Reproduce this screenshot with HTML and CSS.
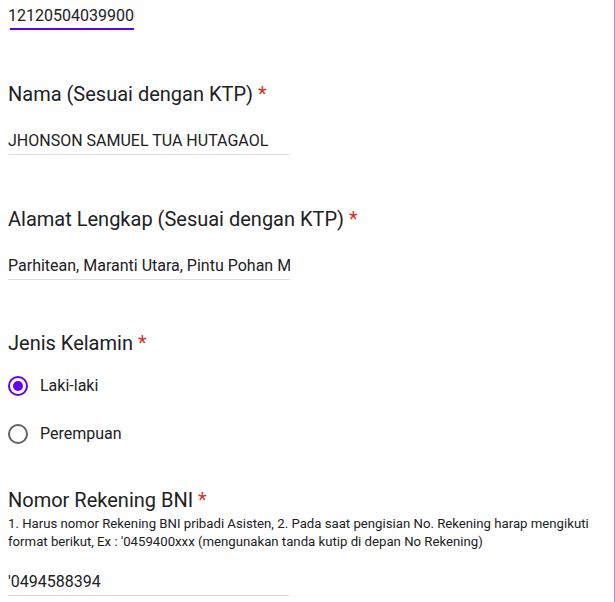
FILE: index.html
```html
<!DOCTYPE html>
<html lang="id">
<head>
<meta charset="utf-8">
<title>Form</title>
<link rel="stylesheet" href="styles.css">
</head>
<body>
<div class="card">
  <div class="field field-short focused">
    <div class="value clip">121205040399000000</div>
    <div class="focus-line"></div>
  </div>

  <div class="question">
    <div class="title">Nama (Sesuai dengan KTP) <span class="req">*</span></div>
    <div class="field">
      <div class="value">JHONSON SAMUEL TUA HUTAGAOL</div>
    </div>
  </div>

  <div class="question">
    <div class="title">Alamat Lengkap (Sesuai dengan KTP) <span class="req">*</span></div>
    <div class="field">
      <div class="value clip">Parhitean, Maranti Utara, Pintu Pohan Meranti</div>
    </div>
  </div>

  <div class="question q-radio">
    <div class="title">Jenis Kelamin <span class="req">*</span></div>
    <div class="radios">
      <div class="radio-row">
        <span class="radio checked"><span class="dot"></span></span>
        <span class="radio-label">Laki-laki</span>
      </div>
      <div class="radio-row">
        <span class="radio"></span>
        <span class="radio-label">Perempuan</span>
      </div>
    </div>
  </div>

  <div class="question after-radios">
    <div class="title">Nomor Rekening BNI <span class="req">*</span></div>
    <div class="desc">1. Harus nomor Rekening BNI pribadi Asisten, 2. Pada saat pengisian No. Rekening harap mengikuti format berikut, Ex : '0459400xxx (mengunakan tanda kutip di depan No Rekening)</div>
    <div class="field field-last">
      <div class="value">'0494588394</div>
    </div>
  </div>
</div>
</body>
</html>
```

FILE: styles.css
```css
html, body {
  margin: 0;
  padding: 0;
  background: #ffffff;
}

body {
  font-family: Roboto, "Liberation Sans", Arial, sans-serif;
  color: #202124;
}

.card {
  width: 615px;
  min-height: 602px;
  box-sizing: border-box;
  border-right: 1px solid #a08fe6;
  padding: 4px 8px 0 8px;
}

.field {
  width: 282px;
  border-bottom: 1px solid #dadce0;
  padding-bottom: 1px;
}

.field-short {
  width: 127px;
}

.value {
  font-size: 16px;
  line-height: 24px;
  white-space: nowrap;
}

.clip {
  overflow: hidden;
}

.focused {
  border-bottom: 1px solid #dadce0;
  padding-bottom: 0;
}

.focus-line {
  height: 2px;
  background: #6200ee;
  margin: 0 1px -1px 2px;
}

.question {
  margin-top: 52px;
}

.question.q-radio {
  margin-top: 51px;
}

.question.after-radios {
  margin-top: 30px;
}

.title {
  font-size: 20px;
  line-height: 24px;
  color: #202124;
}

.req {
  color: #d93025;
}

.question .field {
  margin-top: 23px;
}

.radios {
  margin-top: 7px;
  display: flex;
  flex-direction: column;
}

.radio-row {
  display: flex;
  align-items: center;
  height: 48px;
}

.radio {
  width: 20px;
  height: 20px;
  box-sizing: border-box;
  border: 2px solid #5f6368;
  border-radius: 50%;
  display: flex;
  align-items: center;
  justify-content: center;
}

.radio.checked {
  border-color: #6200ee;
}

.dot {
  width: 10px;
  height: 10px;
  border-radius: 50%;
  background: #6200ee;
}

.radio-label {
  margin-left: 12px;
  font-size: 16px;
  line-height: 24px;
}

.desc {
  margin-top: 3px;
  font-size: 13.2px;
  line-height: 18px;
  color: #202124;
  width: 598px;
}

.question .field-last {
  margin-top: 19px;
}
```
